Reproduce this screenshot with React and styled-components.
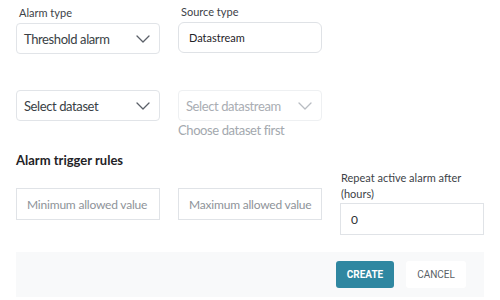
import React from "react";
import styled, { createGlobalStyle } from "styled-components";

const Global = createGlobalStyle`
  body {
    margin: 0;
    background: #fff;
    font-family: "Lato", "Noto Sans", sans-serif;
    color: #2b2f33;
  }
`;

function Chevron({ faded }) {
  return (
    <svg width="14" height="8" viewBox="0 0 14 8" fill="none">
      <path
        d="M1 1l6 6 6-6"
        stroke={faded ? "#b8bcc2" : "#5b6068"}
        strokeWidth="1.3"
        strokeLinecap="round"
        strokeLinejoin="round"
      />
    </svg>
  );
}

export default function App() {
  return (
    <>
      <Global />
      <Page>
        <Row>
          <Field>
            <Label>Alarm type</Label>
            <Select>
              <span>Threshold alarm</span>
              <Chevron />
            </Select>
          </Field>
          <Field>
            <Label small>Source type</Label>
            <TextBox>Datastream</TextBox>
          </Field>
        </Row>

        <Row second>
          <Field>
            <Select>
              <span>Select dataset</span>
              <Chevron />
            </Select>
          </Field>
          <Field>
            <Select disabled>
              <span>Select datastream</span>
              <Chevron faded />
            </Select>
            <Hint>Choose dataset first</Hint>
          </Field>
        </Row>

        <Heading>Alarm trigger rules</Heading>

        <RulesRow>
          <Field offset>
            <Input placeholder>Minimum allowed value</Input>
          </Field>
          <Field offset>
            <Input placeholder>Maximum allowed value</Input>
          </Field>
          <Field>
            <Label wrap>Repeat active alarm after (hours)</Label>
            <Input>0</Input>
          </Field>
        </RulesRow>

        <Footer>
          <PrimaryButton>CREATE</PrimaryButton>
          <GhostButton>CANCEL</GhostButton>
        </Footer>
      </Page>
    </>
  );
}

const Page = styled.div`
  width: 468px;
  padding: 0 16px;
`;

const Row = styled.div`
  display: flex;
  gap: 18px;
  margin-top: ${(p) => (p.second ? "36px" : "5px")};
`;

const Field = styled.div`
  width: 144px;
  display: flex;
  flex-direction: column;
  padding-top: ${(p) => (p.offset ? "18px" : "0")};
`;

const Label = styled.div`
  font-size: 11px;
  color: #3d4248;
  line-height: 16px;
  padding-left: ${(p) => (p.wrap ? "1px" : "3px")};
  margin-bottom: ${(p) => (p.wrap ? "1px" : "2px")};
  margin-top: ${(p) => (p.small ? "-1px" : "0")};
  padding-right: ${(p) => (p.wrap ? "12px" : "0")};
`;

const Select = styled.div`
  box-sizing: border-box;
  height: 31px;
  border: 1px solid ${(p) => (p.disabled ? "#eef0f2" : "#e1e4e8")};
  border-radius: 4px;
  display: flex;
  align-items: center;
  justify-content: space-between;
  padding: 0 8px 0 7px;
  font-size: 13px;
  letter-spacing: -0.4px;
  color: ${(p) => (p.disabled ? "#a9adb3" : "#3a3f45")};
  white-space: nowrap;
  svg {
    flex-shrink: 0;
    margin-right: 1px;
  }
`;

const TextBox = styled.div`
  box-sizing: border-box;
  height: 31px;
  border: 1px solid #dfe2e6;
  border-radius: 6px;
  display: flex;
  align-items: center;
  padding: 0 10px;
  font-size: 11px;
  color: #1f2328;
`;

const Hint = styled.div`
  margin-top: 1px;
  font-size: 13px;
  letter-spacing: -0.4px;
  color: #a3a8ae;
`;

const Heading = styled.div`
  margin-top: 14px;
  font-size: 13px;
  line-height: 16px;
  font-weight: 700;
  color: #1f2327;
`;

const RulesRow = styled.div`
  display: flex;
  gap: 18px;
  align-items: flex-start;
  margin-top: 2px;
`;

const Input = styled.div`
  box-sizing: border-box;
  height: 32px;
  border: 1px solid #e0e3e7;
  display: flex;
  align-items: center;
  padding: 0 10px;
  white-space: nowrap;
  overflow: hidden;
  font-size: 12px;
  letter-spacing: ${(p) => (p.placeholder ? "-0.2px" : "0")};
  color: ${(p) => (p.placeholder ? "#8e9399" : "#2a2e33")};
`;

const Footer = styled.div`
  margin-top: 17px;
  height: 45px;
  background: #f8f9fa;
  display: flex;
  align-items: center;
  justify-content: flex-end;
  gap: 12px;
  padding-right: 18px;
`;

const BaseButton = styled.button`
  height: 27px;
  border: none;
  border-radius: 3px;
  font-family: "Roboto", "Inter", sans-serif;
  font-size: 10px;
  padding: 0;
  cursor: pointer;
`;

const PrimaryButton = styled(BaseButton)`
  width: 58px;
  background: #2f87a1;
  color: #fff;
  font-weight: 700;
`;

const GhostButton = styled(BaseButton)`
  width: 60px;
  background: #fff;
  color: #5a5f66;
  font-weight: 400;
`;
